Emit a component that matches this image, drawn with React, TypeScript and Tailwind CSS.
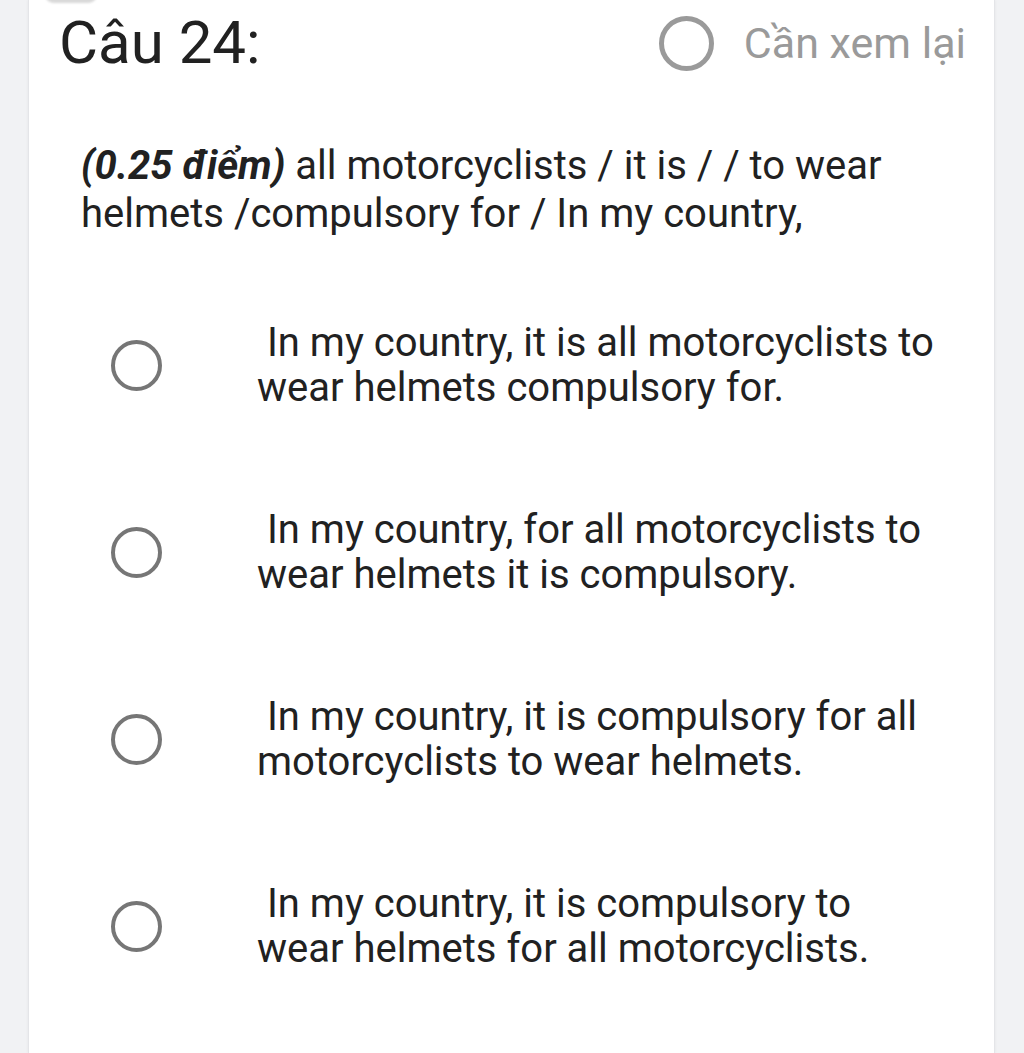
const options = [
  "In my country, it is all motorcyclists to wear helmets compulsory for.",
  "In my country, for all motorcyclists to wear helmets it is compulsory.",
  "In my country, it is compulsory for all motorcyclists to wear helmets.",
  "In my country, it is compulsory to wear helmets for all motorcyclists.",
];

function Radio({ big }: { big?: boolean }) {
  return big ? (
    <span className="block w-[55px] h-[55px] rounded-full border-[5px] border-[#9a9a9a]" />
  ) : (
    <span className="block w-[51px] h-[51px] rounded-full border-[4.5px] border-[#767676]" />
  );
}

export default function App() {
  return (
    <div className="min-h-[1053px] bg-[#f1f2f4] font-['Roboto',sans-serif] text-[#212121] overflow-hidden">
      <div className="relative ml-[28px] w-[967px] min-h-[1053px] bg-white border-x border-[#e4e5e8] shadow-[0_0_3px_rgba(0,0,0,0.06)]">
        {/* shadow of the card above */}
        <div className="absolute left-[16px] -top-[14px] w-[52px] h-[17px] rounded-full bg-[#d9d9d9] blur-[1px]" />

        <header className="flex items-center justify-between pl-[30px] pr-[28px] pt-[10px]">
          <h2 className="text-[60px] leading-[66px]">Câu 24:</h2>
          <div className="flex items-center gap-[30px] text-[#9a9a9a]">
            <Radio big />
            <span className="text-[43px] leading-[50px]">Cần xem lại</span>
          </div>
        </header>

        <p className="mt-[66px] pl-[52px] pr-[30px] text-[40px] leading-[48px]">
          <b className="italic font-bold">(0.25 điểm)</b> all motorcyclists / it is / / to wear helmets
          /compulsory for / In my country,
        </p>

        <ul className="mt-[82px] flex flex-col gap-[97px]">
          {options.map((o) => (
            <li key={o} className="flex items-center">
              <div className="w-[228px] pl-[82px]">
                <Radio />
              </div>
              <p className="w-[682px] text-[40px] leading-[45px]">&nbsp;{o}</p>
            </li>
          ))}
        </ul>
      </div>
    </div>
  );
}
